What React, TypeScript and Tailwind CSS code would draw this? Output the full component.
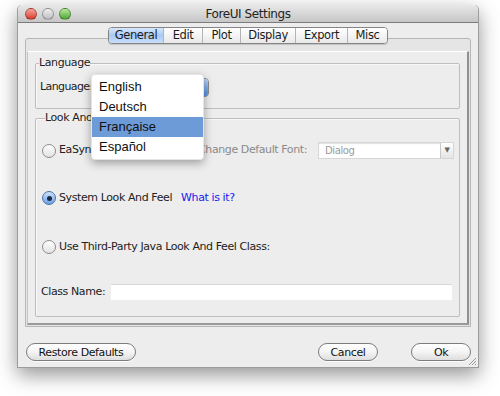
import type { ReactNode } from 'react';

const tabs = [
  { label: 'General', w: 'w-[54px]', on: true },
  { label: 'Edit', w: 'w-[39px]', on: false },
  { label: 'Plot', w: 'w-[38px]', on: false },
  { label: 'Display', w: 'w-[55px]', on: false },
  { label: 'Export', w: 'w-[52px]', on: false },
  { label: 'Misc', w: 'w-[40px]', on: false },
];

const langs = ['English', 'Deutsch', 'Française', 'Español'];

function Light({ color }: { color: string }) {
  return <span className={`block w-[12px] h-[12px] rounded-full border border-black/30 ${color}`} />;
}

function Radio({ checked }: { checked?: boolean }) {
  return checked ? (
    <span className="flex items-center justify-center w-[14px] h-[14px] rounded-full border border-[#4a6fa8] bg-gradient-to-b from-[#cfe2fb] to-[#6a9fe6] shrink-0">
      <span className="block w-[5px] h-[5px] rounded-full bg-[#1b2a44]" />
    </span>
  ) : (
    <span className="block w-[14px] h-[14px] rounded-full border border-[#8d8d8d] bg-gradient-to-b from-white to-[#e2e2e2] shrink-0" />
  );
}

function Button({ children, w }: { children: ReactNode; w: string }) {
  return (
    <button className={`h-[18px] ${w} rounded-full border border-[#7c7c7c] bg-gradient-to-b from-white via-[#f4f4f4] to-[#dedede] text-[11px] leading-none text-[#111] shadow-[0_1px_0_rgba(255,255,255,0.8)]`}>
      {children}
    </button>
  );
}

function Group({ title, className, children }: { title: string; className?: string; children: ReactNode }) {
  return (
    <fieldset className={`border border-[#bdbdbd] rounded-[2px] shadow-[inset_1px_1px_0_#f8f8f8] ${className ?? ''}`}>
      <legend className="ml-[3px] text-[11px] leading-[12px] text-[#222]">{title}</legend>
      {children}
    </fieldset>
  );
}

export default function App() {
  return (
    <div
      className="w-[500px] h-[396px] bg-white pt-[5px] pl-[17px] overflow-hidden tracking-[-0.4px]"
      style={{ fontFamily: '"DejaVu Sans", "Liberation Sans", sans-serif' }}
    >
      <div className="relative w-[462px] h-[363px] flex flex-col bg-[#ededed] rounded-t-[5px] border-x border-b border-[#9c9c9c] shadow-[0_7px_20px_rgba(0,0,0,0.42)]">
        {/* title bar */}
        <div className="relative h-[18px] flex items-center rounded-t-[5px] bg-gradient-to-b from-[#e8e8e8] to-[#c6c6c6] border-b border-[#7b7b7b]">
          <div className="flex items-center gap-[5px] pl-[7px]">
            <Light color="bg-gradient-to-b from-[#f7a19a] to-[#d6382c]" />
            <Light color="bg-gradient-to-b from-[#f0f0f0] to-[#bdbdbd]" />
            <Light color="bg-gradient-to-b from-[#b7ec9a] to-[#4ea530]" />
          </div>
          <span className="absolute inset-x-0 text-center text-[12px] text-[#222]">ForeUI Settings</span>
        </div>

        <div className="flex-1 flex flex-col px-[7px]">
          {/* tabs */}
          <div className="relative z-10 mt-[4px] flex justify-center">
            <div className="flex h-[17px] rounded-[4px] border border-[#858585] overflow-hidden shadow-[0_1px_1px_rgba(0,0,0,0.15)]">
              {tabs.map((t, i) => (
                <div
                  key={t.label}
                  className={`${t.w} flex items-center justify-center text-[11.5px] text-[#1c1c1c] ${i > 0 ? 'border-l border-[#b4b4b4]' : ''} ${
                    t.on ? 'bg-gradient-to-b from-[#d7e7fc] via-[#a9c9f3] to-[#c9defb]' : 'bg-gradient-to-b from-white to-[#e9e9e9]'
                  }`}
                >
                  {t.label}
                </div>
              ))}
            </div>
          </div>

          {/* tab pane */}
          <div className="-mt-[6px] h-[289px] flex flex-col border border-[#b6b6b6] rounded-t-[3px] bg-[#e5e5e5]">
            <div className="flex-1 mt-[12px] mx-[1px] mb-[1px] flex flex-col px-[7px] pt-[5px] pb-[6px] bg-[#ededed] border-t border-t-white border-l border-l-[#c4c4c4] border-r-2 border-r-[#8f8f8f] border-b-2 border-b-[#9a9a9a]">
              <Group title="Language" className="pb-[11px]">
                <div className="flex items-center mt-[9px] pl-[4px]">
                  <span className="text-[11px] text-[#222] w-[52px] tracking-[-0.6px]">Language:</span>
                  <div className="h-[19px] w-[117px] flex rounded-[4px] border border-[#8a8a8a] bg-white overflow-hidden">
                    <span className="flex-1 text-[11px] pl-[6px] leading-[17px]">English</span>
                    <span className="w-[16px] bg-gradient-to-b from-[#bcd6f8] to-[#4f8ce0] border-l border-[#5b7fb5]" />
                  </div>
                </div>
              </Group>

              <Group title="Look And Feel" className="flex-1 mt-[3px] pl-[6px] pr-[5px]">
                <div className="flex items-center justify-between mt-[18px] h-[17px]">
                  <div className="flex items-center gap-[3px]">
                    <Radio />
                    <span className="text-[11px] text-[#222]">EaSynth Look And Feel</span>
                  </div>
                  <div className="flex items-center gap-[11px]">
                    <span className="text-[11px] text-[#8a8a8a]">Change Default Font:</span>
                    <div className="h-[17px] w-[136px] flex bg-white border border-[#d6d6d6] shadow-[inset_0_1px_1px_rgba(0,0,0,0.12)]">
                      <span className="flex-1 pl-[6px] text-[10px] leading-[15px] text-[#9a9a9a]">Dialog</span>
                      <span className="w-[13px] flex items-center justify-center border-l border-[#c8c8c8] bg-gradient-to-b from-white to-[#e4e4e4] text-[7px] text-[#666]">▼</span>
                    </div>
                  </div>
                </div>

                <div className="flex items-center mt-[30px] h-[18px] gap-[3px]">
                  <Radio checked />
                  <span className="text-[11px] text-[#222]">System Look And Feel</span>
                  <span className="ml-[6px] text-[11px] text-[#2020f0]">What is it?</span>
                </div>

                <div className="flex items-center mt-[31px] h-[18px] gap-[3px]">
                  <Radio />
                  <span className="text-[11px] text-[#222]">Use Third-Party Java Look And Feel Class:</span>
                </div>

                <div className="flex items-center mt-[28px] h-[16px] -ml-[1px] pr-[2px]">
                  <span className="w-[70px] text-[11px] text-[#222]">Class Name:</span>
                  <div className="flex-1 h-[16px] bg-white border-t border-[#d8d8d8]" />
                </div>
              </Group>
            </div>
          </div>

          {/* buttons */}
          <div className="mt-[16px] flex items-center pl-[1px]">
            <Button w="w-[110px]">Restore Defaults</Button>
            <div className="ml-auto flex gap-[33px]">
              <Button w="w-[60px]">Cancel</Button>
              <Button w="w-[60px]">Ok</Button>
            </div>
          </div>
        </div>

        {/* resize grip */}
        <svg className="absolute right-[1px] bottom-[1px]" width="9" height="9" viewBox="0 0 9 9">
          <path d="M8 1 L1 8 M8 4 L4 8 M8 7 L7 8" stroke="#9a9a9a" strokeWidth="1" />
        </svg>

        {/* language popup */}
        <div
          className="absolute left-[73px] top-[69px] w-[113px] py-[2px] bg-white rounded-[4px] shadow-[0_3px_10px_rgba(0,0,0,0.35)] border border-black/10 tracking-normal"
          style={{ fontFamily: '"Liberation Sans", Arial, sans-serif' }}
        >
          {langs.map((l) => (
            <div key={l} className={`h-[20px] pl-[7px] flex items-center text-[13px] text-[#111] ${l === 'Française' ? 'bg-[#6d9bd8]' : ''}`}>
              {l}
            </div>
          ))}
        </div>
      </div>
    </div>
  );
}
